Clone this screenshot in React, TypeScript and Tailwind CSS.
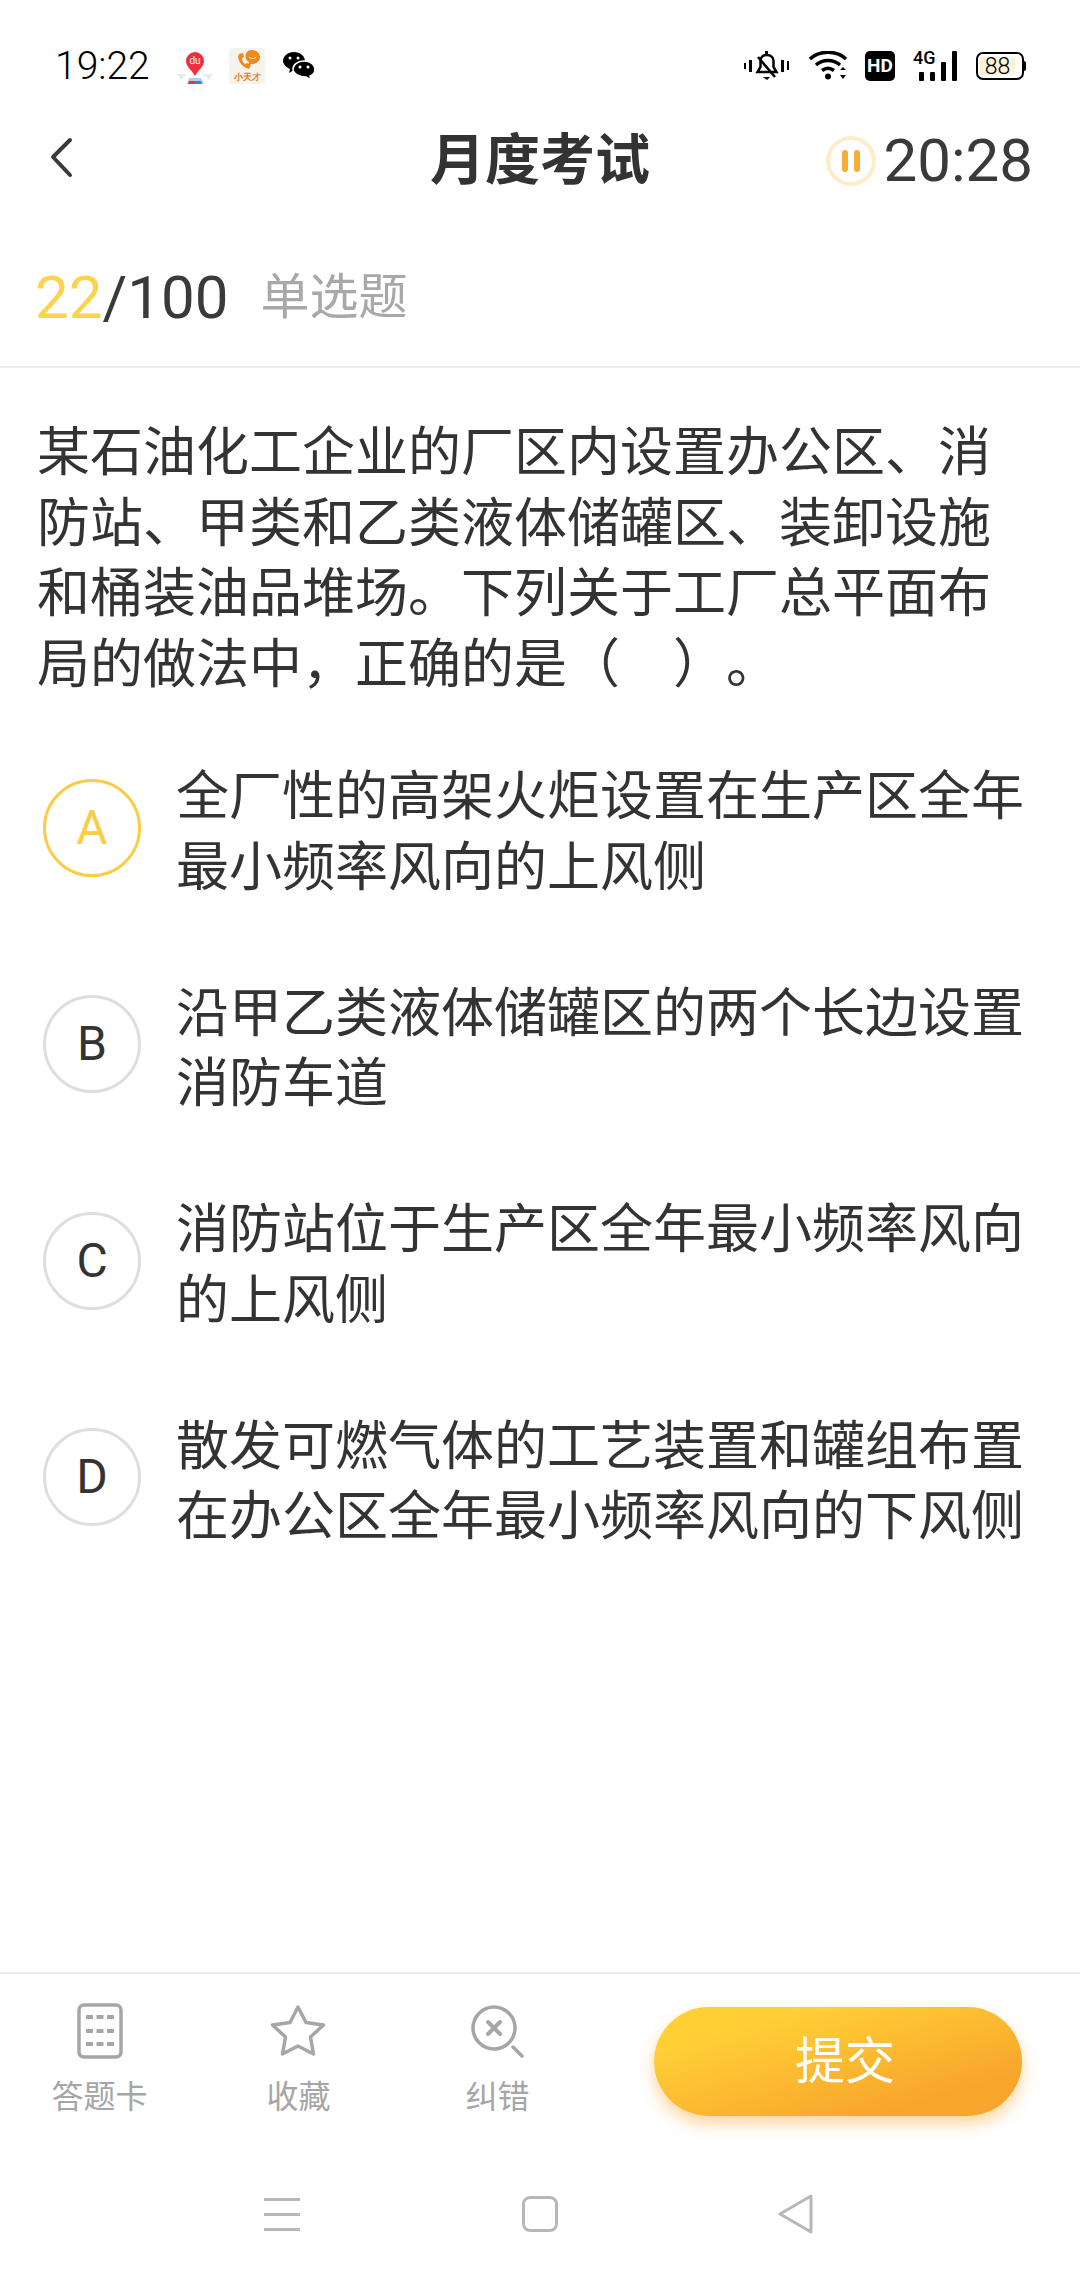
const sans = 'font-["Roboto","Noto_Sans_CJK_SC",sans-serif]';

const options = [
    { key: 'A', text: '全厂性的高架火炬设置在生产区全年最小频率风向的上风侧', active: true },
    { key: 'B', text: '沿甲乙类液体储罐区的两个长边设置消防车道', active: false },
    { key: 'C', text: '消防站位于生产区全年最小频率风向的上风侧', active: false },
    { key: 'D', text: '散发可燃气体的工艺装置和罐组布置在办公区全年最小频率风向的下风侧', active: false },
];

const BaiduIcon = () => (
    <svg width="36" height="32" viewBox="0 0 36 32" className="mt-[4px] ml-[25px]">
        <path d="M0 22l10 0-6 6z M36 22l-10 0 6 6z" fill="#e4eee8" />
        <path d="M12 26h12l3 6H10z" fill="#a9d3ec" />
        <path d="M12 29h6v3h-7z" fill="#d83a4a" />
        <path d="M18 29h6l1 3h-7z" fill="#3d7fd8" />
        <path d="M18 24 C15 18 9 15 9 9 a9 9 0 0 1 18 0 C27 15 21 18 18 24z" fill="#ee2f3d" />
        <text x="18" y="12" textAnchor="middle" fontSize="10" fill="#fff" fontFamily="Roboto">du</text>
    </svg>
);

const PhoneIcon = () => (
    <div className="ml-[16px] flex h-[36px] w-[36px] flex-col items-center rounded-[3px] bg-[#f5f3ee]">
        <svg width="28" height="24" viewBox="0 0 26 24">
            <path d="M5 6c-3 4 2 13 10 15l2-4-4-2-2 1c-2-1-3-4-3-6l2-1-1-4z" fill="#f08a1c" />
            <path d="M14 3a8 7 0 1 1 3 13l-3 2 1-4a8 7 0 0 1-1-11z" fill="#f08a1c" />
            <path d="M15 9c2 2 5 2 7 0" stroke="#fff" strokeWidth="1" fill="none" />
        </svg>
        <span className="text-[9px] leading-[10px] font-bold text-[#e07a20]">小天才</span>
    </div>
);

const WechatIcon = () => (
    <svg width="32" height="29" viewBox="0 0 32 29" className="ml-[18px]">
        <path d="M11 0c6 0 11 4 11 9 0 5-5 9-11 9l-5 3 1-4C3 15 0 12 0 9c0-5 5-9 11-9z" fill="#000" />
        <path d="M21 9c6 0 11 3.500 11 8 0 3-2 6-5 7l1 4-5-3c-6 0-13-3-13-8 0-4.500 5-8 11-8z" fill="#000" stroke="#fff" strokeWidth="1.500" />
        <circle cx="7" cy="6" r="1.500" fill="#fff" />
        <circle cx="15" cy="6" r="1.500" fill="#fff" />
        <circle cx="17" cy="15" r="1.500" fill="#fff" />
        <circle cx="25" cy="15" r="1.500" fill="#fff" />
    </svg>
);

const MuteIcon = () => (
    <svg width="45" height="30" viewBox="0 0 45 30">
        <path d="M0 12h2v6H0z M5 9h3v12H5z M37 9h3v12h-3z M43 10h2v9h-2z" fill="#000" />
        <path d="M22.500 4c-4 0-6 3-6 6v6l-3 5h19l-3-5v-6c0-3-2-6-7-6z" fill="none" stroke="#000" strokeWidth="2.500" />
        <path d="M14 6l17 20" stroke="#000" strokeWidth="2.500" />
        <path d="M21 0h3v3h-3z M19 26h7l-3 3z" fill="#000" />
    </svg>
);

const WifiIcon = () => (
    <svg width="40" height="30" viewBox="0 0 40 30">
        <path d="M1 8c10-9 26-9 36 0 M7 14c7-6 17-6 24 0 M13 19.500c4-3 8-3 12 0" fill="none" stroke="#000" strokeWidth="3.500" />
        <circle cx="19" cy="25.500" r="3" fill="#000" />
        <path d="M31 19l3-3 3 3z M31 24h6l-3 4z" fill="#000" />
    </svg>
);

const SignalIcon = () => (
    <div className="relative ml-[18px] flex h-[30px] w-[44px] items-end gap-[6px] pl-[6px]">
        <span className="absolute top-[-3px] left-0 font-['Roboto'] text-[18px] leading-[20px] font-medium text-black">4G</span>
        <div className="h-[9px] w-[5px] rounded-[1px] bg-black" />
        <div className="h-[9px] w-[5px] rounded-[1px] bg-black" />
        <div className="h-[19px] w-[5px] rounded-[1px] bg-black" />
        <div className="h-[30px] w-[5px] rounded-[1px] bg-black" />
    </div>
);

const Battery = () => (
    <div className="ml-[19px] flex items-center">
        <div className="flex h-[28px] w-[48px] items-center overflow-hidden rounded-[7px] border-[2.500px] border-black bg-white px-[2px]">
            <div className="flex h-[18px] w-[35px] items-center justify-center bg-[#fdf3dc] font-['Roboto'] text-[23px] leading-none font-light text-black">
                88
            </div>
        </div>
        <div className="h-[10px] w-[2px] rounded-r-[2px] bg-black" />
    </div>
);

const StatusBar = () => (
    <div className="flex h-[130px] items-center pt-[2px] pr-[54px] pl-[55px]">
        <span className="w-[97px] font-['Roboto'] text-[39px] leading-none font-light text-black">19:22</span>
        <BaiduIcon />
        <PhoneIcon />
        <WechatIcon />
        <div className="ml-auto flex items-center">
            <MuteIcon />
            <div className="ml-[20px]">
                <WifiIcon />
            </div>
            <div className="ml-[16px] flex h-[30px] w-[30px] items-center justify-center rounded-[5px] bg-black font-['Roboto'] text-[19px] font-bold text-white">
                HD
            </div>
            <SignalIcon />
            <Battery />
        </div>
    </div>
);

const NavHeader = () => (
    <div className="relative flex h-[60px] items-center justify-center">
        <svg width="24" height="42" viewBox="0 0 24 42" className="absolute top-[7px] left-[49px]">
            <path d="M21 3L4 20l17 18" fill="none" stroke="#3a3a3a" strokeWidth="4" strokeLinecap="round" strokeLinejoin="round" />
        </svg>
        <h1 className={`${sans} text-[55px] leading-none font-bold text-[#333]`}>月度考试</h1>
        <div className="absolute top-[1px] right-[47px] flex items-center gap-[8px]">
            <div className="flex h-[50px] w-[50px] items-center justify-center gap-[6px] rounded-full border-[4px] border-[#fdedc8]">
                <div className="h-[22px] w-[6px] rounded-[3px] bg-[#f6ae38]" />
                <div className="h-[22px] w-[6px] rounded-[3px] bg-[#f6ae38]" />
            </div>
            <span className="font-['Roboto'] text-[60px] leading-none text-[#3a3a3a]">20:28</span>
        </div>
    </div>
);

const Option = ({ optionKey, text, active }: { optionKey: string; text: string; active: boolean }) => (
    <div className="flex items-center">
        <div
            className={`mb-[10px] flex h-[98px] w-[98px] shrink-0 items-center justify-center rounded-full border-[3px] font-['Roboto'] text-[48px] ${
                active ? 'border-[#f9cd45] text-[#f9cd45]' : 'border-[#dedede] text-[#333]'
            }`}
        >
            {optionKey}
        </div>
        <p className={`${sans} ml-[35px] w-[860px] text-[53px] leading-[70.500px] text-[#333]`}>{text}</p>
    </div>
);

const TabItem = ({ label, children }: { label: string; children: React.ReactNode }) => (
    <div className="flex w-[199px] shrink-0 flex-col items-center">
        <div className="flex h-[58px] items-center">{children}</div>
        <span className={`${sans} mt-[19px] text-[32px] leading-[36px] text-[#a6a6a6]`}>{label}</span>
    </div>
);

const BottomBar = () => (
    <div className="flex h-[188px] items-start border-t-2 border-[#ececec] pt-[28px] pr-[58px]">
        <TabItem label="答题卡">
            <svg width="46" height="56" viewBox="0 0 46 56">
                <rect x="2" y="2" width="42" height="52" rx="5" fill="none" stroke="#a6a6a6" strokeWidth="3.500" />
                <path d="M9 14h28 M9 28h28 M9 41h28" stroke="#a6a6a6" strokeWidth="4" strokeDasharray="7 3.500" strokeLinecap="butt" />
            </svg>
        </TabItem>
        <TabItem label="收藏">
            <svg width="56" height="54" viewBox="0 0 56 54" className="-ml-[2px]">
                <path
                    d="M28 3l8 15.500 17.500 2.500-13 12 3 17L28 42l-15.500 8 3-17-13-12 17.500-2.500z"
                    fill="none"
                    stroke="#a6a6a6"
                    strokeWidth="3.500"
                    strokeLinejoin="round"
                />
            </svg>
        </TabItem>
        <TabItem label="纠错">
            <svg width="53" height="54" viewBox="0 0 53 54">
                <circle cx="23" cy="24" r="21" fill="none" stroke="#a6a6a6" strokeWidth="3.500" />
                <path d="M17 18l12 12 M29 18L17 30" stroke="#a6a6a6" strokeWidth="4" strokeLinecap="round" />
                <path d="M42 43l9 9" stroke="#a6a6a6" strokeWidth="3.500" strokeLinecap="round" />
            </svg>
        </TabItem>
        <button
            className={`${sans} mt-[5px] ml-auto flex h-[109px] w-[368px] items-center justify-center rounded-full bg-gradient-to-br from-[#ffd036] from-20% to-[#f8a52c] to-80% pt-[2px] pl-[14px] text-[50px] text-white shadow-[0_8px_16px_rgba(248,165,44,0.45)]`}
        >
            提交
        </button>
    </div>
);

const SystemNav = () => (
    <div className="flex h-[120px] items-start pt-[34px] pl-[264px]">
        <div className="mt-[4px] flex h-[33px] w-[36px] flex-col justify-between">
            <div className="h-[3px] bg-[#b8b8b8]" />
            <div className="h-[3px] bg-[#b8b8b8]" />
            <div className="h-[3px] bg-[#b8b8b8]" />
        </div>
        <div className="mt-[2px] ml-[222px] h-[36px] w-[36px] rounded-[8px] border-[3px] border-[#b8b8b8]" />
        <svg width="38" height="40" viewBox="0 0 38 40" className="ml-[219px]">
            <path d="M3 20L34 2v36z" fill="none" stroke="#b8b8b8" strokeWidth="3" strokeLinejoin="round" />
        </svg>
    </div>
);

export default function App() {
    return (
        <div className="flex h-[2280px] w-[1080px] flex-col bg-white">
            <StatusBar />
            <NavHeader />

            <div className="flex h-[178px] items-center gap-[32px] border-b-2 border-[#ececec] pt-[39px] pl-[35px]">
                <span className="font-['Roboto'] text-[60px] leading-none text-[#3a3a3a]">
                    <span className="text-[#fbd34e]">22</span>/100
                </span>
                <span className={`${sans} text-[49px] leading-none text-[#a8a8a8]`}>单选题</span>
            </div>

            <p
                className={`${sans} mt-[50px] w-[1000px] pl-[37px] text-[53px] leading-[70.500px] text-[#333] [text-spacing-trim:space-all]`}
            >
                某石油化工企业的厂区内设置办公区、消防站、甲类和乙类液体储罐区、装卸设施和桶装油品堆场。下列关于工厂总平面布局的做法中，正确的是（　）。
            </p>

            <div className="mt-[62px] flex flex-col gap-[75.500px] pl-[43px]">
                {options.map((option) => (
                    <Option key={option.key} optionKey={option.key} text={option.text} active={option.active} />
                ))}
            </div>

            <div className="mt-auto">
                <BottomBar />
                <SystemNav />
            </div>
        </div>
    );
}
